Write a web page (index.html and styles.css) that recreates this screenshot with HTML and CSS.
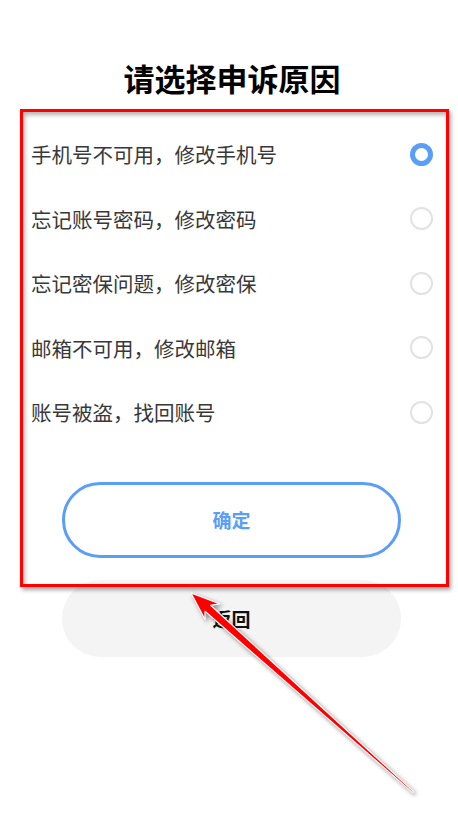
FILE: index.html
```html
<!DOCTYPE html>
<html lang="zh">
<head>
<meta charset="utf-8">
<link rel="stylesheet" href="styles.css">
</head>
<body>
<div class="page">
  <h1 class="title">请选择申诉原因</h1>
  <ul class="options">
    <li class="option"><span class="label">手机号不可用，修改手机号</span><span class="radio checked"></span></li>
    <li class="option"><span class="label">忘记账号密码，修改密码</span><span class="radio"></span></li>
    <li class="option"><span class="label">忘记密保问题，修改密保</span><span class="radio"></span></li>
    <li class="option"><span class="label">邮箱不可用，修改邮箱</span><span class="radio"></span></li>
    <li class="option"><span class="label">账号被盗，找回账号</span><span class="radio"></span></li>
  </ul>
  <div class="actions">
    <button class="btn btn-confirm">确定</button>
    <button class="btn btn-back">返回</button>
  </div>
  <div class="highlight"></div>
  <svg class="arrow" width="458" height="820" viewBox="0 0 458 820">
    <polygon points="191,593 219.5,603.8 210.6,605.3 413.6,791.6 412.4,792.4 205.0,611.3 205,619.5" fill="#ff0000" stroke="#ffffff" stroke-width="1.2" stroke-linejoin="round"/>
  </svg>
</div>
</body>
</html>
```
FILE: styles.css
```css
* { box-sizing: border-box; }
html, body { margin: 0; padding: 0; background: #ffffff; }
body {
  font-family: "Noto Sans CJK SC", "Noto Sans", sans-serif;
  width: 458px;
  height: 820px;
  overflow: hidden;
}
.page {
  position: relative;
  width: 458px;
  height: 820px;
  padding-top: 58px;
}
.title {
  margin: 0;
  padding-left: 6px;
  font-size: 31px;
  line-height: 40px;
  font-weight: 700;
  color: #000000;
  text-align: center;
}
.options {
  list-style: none;
  margin: 23.75px 0 0 0;
  padding: 0;
}
.option {
  height: 64.5px;
  display: flex;
  align-items: center;
  justify-content: space-between;
  padding: 0 25px 0 31px;
}
.label {
  font-size: 20.5px;
  line-height: 28px;
  font-weight: 400;
  color: #383838;
}
.radio {
  width: 23px;
  height: 23px;
  border-radius: 50%;
  border: 2px solid #e2e2e2;
  background: #ffffff;
}
.radio.checked {
  border: 5px solid #5b9ef8;
}
.actions {
  display: flex;
  flex-direction: column;
  gap: 22px;
  margin-top: 37.5px;
  padding-left: 62px;
}
.btn {
  width: 339px;
  height: 76px;
  border-radius: 38px;
  font-family: "Noto Sans CJK SC", "Noto Sans", sans-serif;
  font-size: 19px;
  font-weight: 700;
  cursor: pointer;
}
.btn-confirm {
  background: #ffffff;
  border: 3px solid #5b9ef8;
  color: #5b9ef8;
}
.btn-back {
  background: #f4f4f4;
  border: none;
  color: #111111;
  height: 77px;
}
.highlight {
  position: absolute;
  left: 20px;
  top: 109px;
  width: 429px;
  height: 478px;
  border: 3px solid #ff0000;
  box-shadow: 2px 3px 4px rgba(0, 0, 0, 0.35), inset 2px 3px 4px rgba(0, 0, 0, 0.3);
  pointer-events: none;
}
.arrow {
  position: absolute;
  left: 0;
  top: 0;
  pointer-events: none;
  filter: drop-shadow(2px 2px 2px rgba(0, 0, 0, 0.45));
}
```
